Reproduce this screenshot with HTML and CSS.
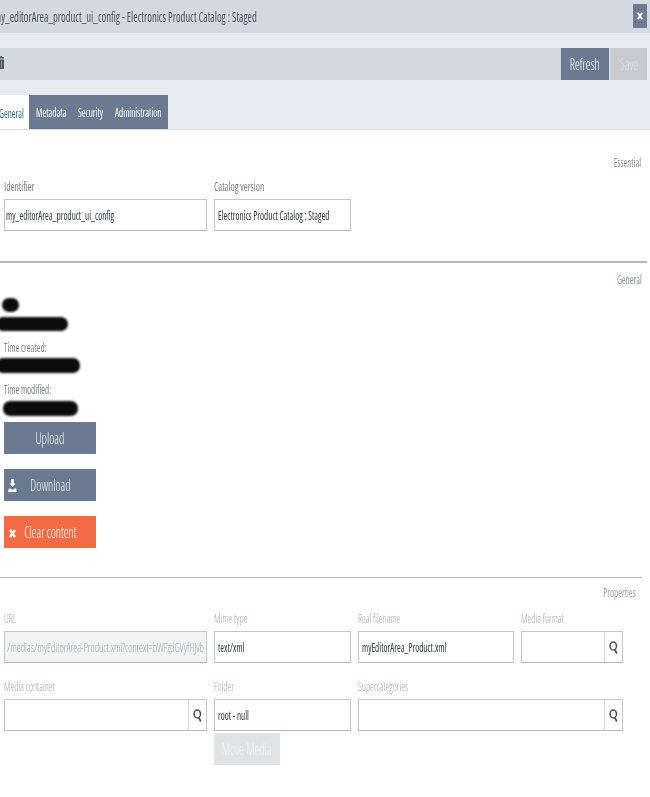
FILE: index.html
```
<!DOCTYPE html>
<html lang="en">
<head>
<meta charset="utf-8">
<title>Editor area</title>
<link rel="stylesheet" href="styles.css">
</head>
<body>
<div class="page">
  <header class="titlebar">
    <span class="title t">my_editorArea_product_ui_config - Electronics Product Catalog : Staged</span>
    <button class="close"><svg width="6" height="8" viewBox="0 0 6 8"><path d="M0.8 0.8 L5.2 7.2 M5.2 0.8 L0.8 7.2" stroke="#fff" stroke-width="1.9" fill="none"/></svg></button>
  </header>
  <div class="shell">
    <div class="toolbar">
      <svg class="trash" width="5" height="13" viewBox="0 0 5 13"><path d="M0 1h1.500V0h1.500v1h2v1.500H0zM0 3.500h5V13H0z" fill="#4d5a6c"/><path d="M2.500 5v6.500" stroke="#aab2bd" stroke-width=".7"/></svg>
      <div class="actions">
        <button class="tbtn refresh"><span class="t">Refresh</span></button>
        <button class="tbtn save"><span class="t">Save</span></button>
      </div>
    </div>
    <nav class="tabs">
      <div class="tab active"><span class="t">General</span></div>
      <div class="tabgroup">
        <div class="tab meta"><span class="t">Metadata</span></div>
        <div class="tab sec-tab"><span class="t">Security</span></div>
        <div class="tab admin"><span class="t">Administration</span></div>
      </div>
    </nav>
  </div>
  <section class="sec essential">
    <div class="sec-name"><span class="t">Essential</span></div>
    <div class="grid">
      <div class="field"><label><span class="t">Identifier</span></label><div class="input tight"><span class="t">my_editorArea_product_ui_config</span></div></div>
      <div class="field"><label><span class="t">Catalog version</span></label><div class="input"><span class="t">Electronics Product Catalog : Staged</span></div></div>
    </div>
  </section>
  <section class="sec general">
    <div class="sec-name"><span class="t">General</span></div>
    <div class="redact r1"></div>
    <div class="redact r2"></div>
    <div class="meta-label"><span class="t">Time created:</span></div>
    <div class="redact r3"></div>
    <div class="meta-label"><span class="t">Time modified:</span></div>
    <div class="redact r4"></div>
    <button class="bigbtn upload"><span class="t">Upload</span></button>
    <button class="bigbtn download"><svg width="9" height="13" viewBox="0 0 9 13"><path d="M3.200 0h2.600v4.500h1.700L4.500 8 1.500 4.500h1.700zM0 13L1 9.500h1.500L4.500 11l2-1.500H8l1 3.500z" fill="#fff"/></svg><span class="t">Download</span></button>
    <button class="bigbtn clear"><svg width="7" height="9" viewBox="0 0 7 9"><path d="M1 1 L6 8 M6 1 L1 8" stroke="#fff" stroke-width="2.600" fill="none"/></svg><span class="t">Clear content</span></button>
  </section>
  <section class="sec props">
    <div class="sec-name"><span class="t">Properties</span></div>
    <div class="grid four">
      <div class="field"><label class="light"><span class="t">URL</span></label><div class="input disabled"><span class="t">/medias/myEditorArea-Product.xml?context=bWFzdGVyfHJvb</span></div></div>
      <div class="field"><label class="light"><span class="t">Mime type</span></label><div class="input"><span class="t">text/xml</span></div></div>
      <div class="field"><label class="light"><span class="t">Real filename</span></label><div class="input"><span class="t">myEditorArea_Product.xml</span></div></div>
      <div class="field"><label class="light"><span class="t">Media format</span></label><div class="input search"><i class="sbtn"><svg width="9" height="13" viewBox="0 0 9 13"><ellipse cx="4.300" cy="5" rx="3.200" ry="4.100" fill="none" stroke="#4a4f58" stroke-width="1.500"/><path d="M5.800 8.500 L7.800 12.500" stroke="#4a4f58" stroke-width="1.700"/></svg></i></div></div>
      <div class="field"><label class="light"><span class="t">Media container</span></label><div class="input search"><i class="sbtn"><svg width="9" height="13" viewBox="0 0 9 13"><ellipse cx="4.300" cy="5" rx="3.200" ry="4.100" fill="none" stroke="#4a4f58" stroke-width="1.500"/><path d="M5.800 8.500 L7.800 12.500" stroke="#4a4f58" stroke-width="1.700"/></svg></i></div></div>
      <div class="field"><label class="light"><span class="t">Folder</span></label><div class="input"><span class="t">root - null</span></div><button class="move"><span class="t">Move Media</span></button></div>
      <div class="field wide"><label class="light"><span class="t">Supercategories</span></label><div class="input search"><i class="sbtn"><svg width="9" height="13" viewBox="0 0 9 13"><ellipse cx="4.300" cy="5" rx="3.200" ry="4.100" fill="none" stroke="#4a4f58" stroke-width="1.500"/><path d="M5.800 8.500 L7.800 12.500" stroke="#4a4f58" stroke-width="1.700"/></svg></i></div></div>
    </div>
  </section>
</div>
</body>
</html>
```
FILE: styles.css
```
* { box-sizing: border-box; }
html, body { margin: 0; padding: 0; background: #fff; }
body { font-family: "Open Sans", "Liberation Sans", sans-serif; font-stretch: 75%; overflow: hidden; }
.page { width: 650px; height: 797px; overflow: hidden; }
button { font: inherit; font-stretch: inherit; border: 0; padding: 0; }
.t { display: inline-block; white-space: nowrap; transform: scaleX(.76); transform-origin: left center; }
button .t { transform-origin: center; }
.sec-name .t { transform-origin: right center; }
.field label .t { transform: scaleX(.8); }

.titlebar { height: 33px; background: #d3d9e0; display: flex; align-items: center; justify-content: space-between; padding: 0 3px 0 0; }
.title { font-size: 14px; color: #4a5564; margin-left: -6px; }
.close { flex: none; width: 14px; height: 24px; background: #6b7a90; display: flex; align-items: center; justify-content: center; margin-top: -1px; }

.shell { height: 97px; background: #e8ebf0; border-bottom: 1px solid #dcdee0; padding-top: 15px; }
.toolbar { height: 32px; background: #d3d9e0; margin-right: 3px; display: flex; align-items: center; justify-content: space-between; }
.trash { margin-bottom: 3px; margin-left: -1px; }
.actions { display: flex; gap: 2px; height: 32px; }
.tbtn { height: 32px; color: #fff; font-size: 16px; font-weight: 300; }
.refresh { width: 48px; background: #6b7a90; }
.save { width: 36px; background: #c8cbcf; color: #dfe1e3; }

.tabs { display: flex; height: 34px; margin-top: 15px; }
.tab { font-size: 12px; color: #fff; display: flex; align-items: center; padding-top: 1px; }
.tab.active { width: 29px; background: #fff; color: #33658f; padding-top: 3px; }
.tab.active .t { margin-left: -1px; }
.tabgroup { display: flex; background: #6b7a90; width: 139px; padding-left: 7px; }
.meta { width: 42px; }
.sec-tab { width: 37px; }
.admin { width: 53px; }

.sec { position: relative; }
.sec-name { text-align: right; font-size: 12px; color: #8a8f96; }

.essential { height: 133px; border-bottom: 2px solid #b5b7ba; margin-right: 3px; padding: 26px 6px 0 4px; }
.essential .sec-name { line-height: 14px; }
.grid { display: flex; gap: 7px; margin-top: 11px; }
.essential .field:first-child { width: 203px; }
.essential .field:last-child { width: 137px; }
.field label { display: block; font-size: 12px; line-height: 12px; height: 18px; color: #7a8290; }
.field label.light { color: #a2a7ae; }
.input { height: 32px; border: 1px solid #c4c6c8; border-bottom-color: #b5b7b9; background: #fff; font-size: 12px; color: #33373d; display: flex; align-items: center; padding-left: 3px; white-space: nowrap; }
.input.tight { padding-left: 1px; }
.input.disabled { background: #f2f3f3; color: #a6a9ad; font-weight: 300; padding-left: 2px; }
.input.disabled .t { transform: scaleX(.83); }
.input.search { justify-content: flex-end; padding: 0; }
.sbtn { width: 18px; height: 100%; border-left: 1px solid #d4d6d8; display: flex; align-items: center; justify-content: center; }

.general { height: 314px; padding: 10px 8px 0 4px; }
.general .sec-name { line-height: 14px; }
.redact { background: #0c0c0c; border-radius: 7px; filter: blur(1.200px); height: 14px; }
.r1 { width: 17px; margin: 11px 0 0 -2px; }
.r2 { width: 72px; margin: 5px 0 0 -8px; }
.r3 { width: 84px; margin: 4px 0 0 -8px; height: 15px; }
.r4 { width: 75px; margin: 5px 0 0 -1px; height: 15px; }
.meta-label { font-size: 12px; line-height: 14px; color: #7a8290; margin: 10px 0 -1px; }
.bigbtn { display: flex; align-items: center; justify-content: center; width: 92px; height: 32px; background: #6b7a90; color: #eef0f3; font-size: 16px; font-weight: 300; position: relative; }
.upload { margin-top: 6px; }
.download { margin-top: 15px; }
.clear { margin-top: 15px; background: #f46c45; color: #fff; }
.download svg { position: absolute; left: 4px; top: 10px; }
.clear svg { position: absolute; left: 5px; top: 13px; }

.props { height: 220px; border-top: 1px solid #b5b7ba; margin-right: 8px; padding: 8px 6px 0 4px; }
.props .sec-name { line-height: 14px; color: #9a9fa6; }
.four { display: grid; grid-template-columns: 203px 137px 156px 102px; column-gap: 7px; row-gap: 18px; margin-top: 13px; }
.props .field label { font-weight: 300; }
.wide { grid-column: span 2; }
.move { display: block; width: 66px; height: 32px; margin-top: 2px; background: #e2e3e4; color: #f3f3f4; font-size: 16px; font-weight: 300; }
.field { position: relative; }
.field:has(.move) { margin-bottom: -34px; }
```
